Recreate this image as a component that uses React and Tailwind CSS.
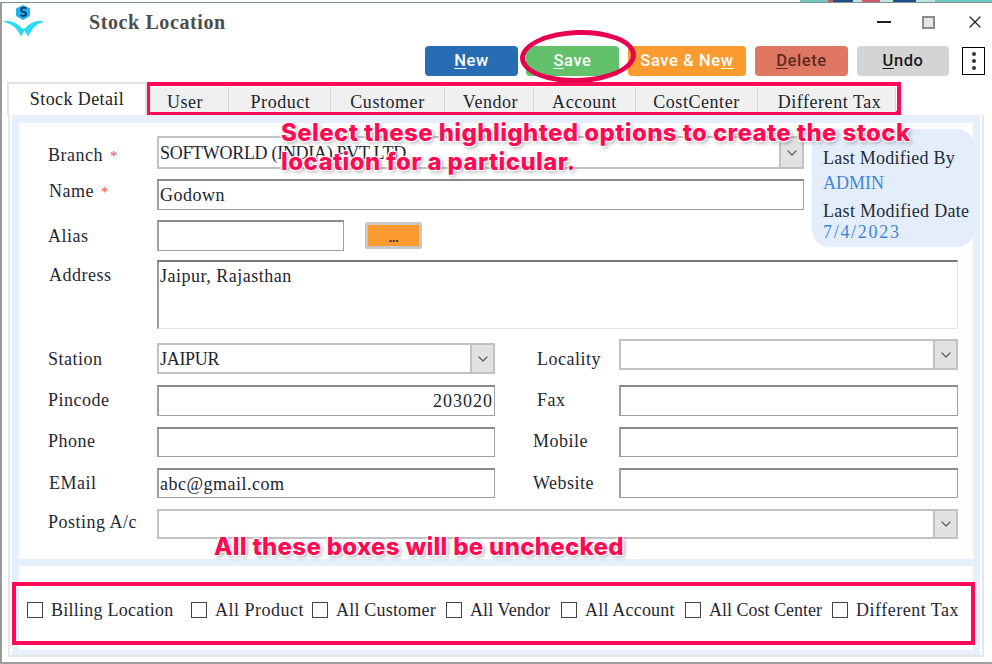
import React from "react";
import { X, ChevronDown } from "lucide-react";

const serif = "font-['Liberation_Serif',serif]";

function Logo() {
  return (
    <svg width="44" height="33" viewBox="0 0 44 33" fill="none">
      <path d="M20 1l7 3.500v7.500L20 16l-7-4V4.500z" fill="#1fb4ea" />
      <path d="M23.500 4.500c-2-1.500-5.500-1-5.500 1.200 0 2.800 5 1.500 5 4.300 0 2.200-3.500 2.500-5.500 1" stroke="#17306f" strokeWidth="1.900" />
      <path d="M0 17.500c7-1.500 13.500 1.500 18 6l2 1.500 3-1.500c4.500-4.500 10-7.500 18-6-6 2-10 5-12.500 9l-3.500 6-3.500-6-3.500 6-3.500-6C12 22.500 7 19.500 0 17.500z" fill="#26dcee" />
    </svg>
  );
}

function Field({ className, children }) {
  return (
    <div className={`h-[31px] border border-[#a0a0a0] border-t-2 border-l-2 border-t-[#8a8a8a] bg-white flex items-center px-[1px] text-[#1c2530] text-[18px] leading-none tracking-[0.5px] ${className}`}>
      {children}
    </div>
  );
}

function Select({ className, value }) {
  return (
    <div className={`h-[31px] border-2 border-[#c2c2c2] bg-white flex items-stretch text-[#1c2530] text-[18px] leading-none tracking-[-0.3px] ${className}`}>
      <span className="flex-1 flex items-center pl-[1px] overflow-hidden whitespace-nowrap">{value}</span>
      <span className="w-[23px] bg-[#e2e2e2] border-l-2 border-[#c2c2c2] flex items-center justify-center">
        <ChevronDown size={16} strokeWidth={1.800} className="text-[#5b5b5b]" />
      </span>
    </div>
  );
}

function Label({ className, children, star }) {
  return (
    <div className={`text-[18px] leading-none tracking-[0.5px] text-[#1f2833] ${className}`}>
      {children}
      {star && <span className="text-[#ea4b4b] ml-[7px] text-[15px]">*</span>}
    </div>
  );
}

function Btn({ className, k, rest, pre = "" }) {
  return (
    <button className={`h-[30px] rounded-[4px] font-['Roboto',sans-serif] font-medium text-[16.500px] tracking-[0.6px] flex items-center justify-center ${className}`}>
      {pre}<span className="underline underline-offset-2">{k}</span>{rest}
    </button>
  );
}

const tabs = [
  ["User", "w-[79px] pr-[8px]"],
  ["Product", "w-[102px] pl-[2px]"],
  ["Customer", "w-[114px]"],
  ["Vendor", "w-[89px] pl-[3px]"],
  ["Account", "w-[102px]"],
  ["CostCenter", "w-[122px]"],
  ["Different Tax", "w-[137px] pl-[6px]"],
];

const checks = [
  ["Billing Location", "w-[164px] tracking-[0.25px]"],
  ["All Product", "w-[122px] tracking-[0.5px] -ml-[1px] pl-[1px]"],
  ["All Customer", "w-[134px] tracking-[0.2px]"],
  ["All Vendor", "w-[115px] tracking-[0.1px]"],
  ["All Account", "w-[124px] tracking-[0.2px]"],
  ["All Cost Center", "w-[147px] tracking-[0px]"],
  ["Different Tax", "w-[134px] tracking-[0.5px]"],
];

const note = "font-['Inter',sans-serif] font-extrabold text-[#ff0a54] [text-shadow:0_0_2px_#fff,1px_1px_1px_#fff,-1px_-1px_1px_#fff,1px_-1px_1px_#fff,-1px_1px_1px_#fff,2px_2px_4px_#0006] whitespace-nowrap";

export default function App() {
  return (
    <div className={`relative w-[992px] h-[664px] overflow-hidden bg-white ${serif}`}>
      <div className="h-[2px] flex pl-[800px]">
        <span className="w-[28px] bg-[#6fc7c0]" />
        <span className="w-[5px] bg-[#c65b5b]" />
        <span className="w-[20px] bg-[#1f4f88]" />
        <span className="w-[9px] bg-[#bfe5e0]" />
        <span className="w-[18px] bg-[#d0586a]" />
        <span className="w-[13px] bg-[#bfe5e0]" />
        <span className="w-[23px] bg-[#1f4f88]" />
        <span className="w-[19px] bg-[#bfe5e0]" />
        <span className="w-[57px] bg-[#6fc7c0]" />
      </div>
      <div className="h-[662px] border-t border-t-[#7f9490] border-l-2 border-l-[#9a9a9a] border-b-2 border-b-[#a0a0a0] flex flex-col">
        {/* title bar */}
        <div className="h-[35px] flex items-center shrink-0">
          <div className="w-[46px] flex justify-center -mt-[1px]"><Logo /></div>
          <div className="ml-[41px] pt-[2px] text-[20px] font-bold text-[#4d4d4d] tracking-[0.6px]">Stock Location</div>
          <div className="ml-auto flex items-center pt-[3px]">
            <span className="w-[14px] h-[2px] bg-[#222]" />
            <span className="w-[13px] h-[13px] ml-[31px] border-2 border-[#8c8c8c] bg-[#e6e6e6]" />
            <X size={20} strokeWidth={1.500} className="ml-[30px] mr-[7px] text-[#222]" />
          </div>
        </div>
        {/* toolbar */}
        <div className="h-[30px] mt-[8px] flex items-center shrink-0 pl-[423px]">
          <Btn className="w-[93px] bg-[#266db3] text-white" k="N" rest="ew" />
          <Btn className="w-[93px] ml-[8px] bg-[#63c16b] text-white" k="S" rest="ave" />
          <Btn className="w-[118px] ml-[9px] bg-[#fb9a2f] text-white" pre="Save & Ne" k="w" rest="" />
          <Btn className="w-[93px] ml-[9px] bg-[#e07763] text-[#5b2a20]" k="D" rest="elete" />
          <Btn className="w-[92px] ml-[9px] bg-[#d4d4d4] text-[#1b1b1b]" k="U" rest="ndo" />
          <div className="w-[23px] h-[28px] ml-[13px] border border-black flex flex-col items-center justify-center gap-[3px]">
            <span className="w-[4px] h-[4px] rounded-full bg-[#333]" />
            <span className="w-[4px] h-[4px] rounded-full bg-[#333]" />
            <span className="w-[4px] h-[4px] rounded-full bg-[#333]" />
          </div>
        </div>
        {/* tabs */}
        <div className="h-[34px] mt-[5px] pl-[5px] flex items-end shrink-0 relative z-10">
          <div className="w-[140px] h-[33px] bg-white border-t-2 border-x-2 border-[#e2e2e2] flex items-center justify-center text-[18px] tracking-[0.4px] text-[#222]">Stock Detail</div>
          <div className="flex h-[25px] ml-[3px] mb-[3px] bg-[#f0f0f0] border-r border-[#d6d6d6]">
            {tabs.map(([t, w]) => (
              <div key={t} className={`${w} border-r border-[#d6d6d6] last:border-r-0 flex items-center justify-center text-[18px] leading-none tracking-[0.55px] text-[#1c2530] pt-[4px]`}>{t}</div>
            ))}
          </div>
        </div>
        {/* outer panel */}
        <div className="ml-[6px] mr-[8px] mb-[5px] flex-1 border-2 border-[#e6e6e6] border-t-0 min-h-0">
          <div className="h-full mx-[2px] bg-[#e6f0fc] px-[7px] pt-[8px] pb-[5px] flex flex-col">
            <div className="h-[436px] bg-white pl-[29px] pr-[15px] pt-[13px] shrink-0">
              {/* top */}
              <div className="flex items-start">
                <div className="w-[756px]">
                  <div className="flex items-center h-[33px]">
                    <Label className="w-[109px] pt-[5px]" star>Branch</Label>
                    <Select className="flex-1 !h-[33px]" value="SOFTWORLD (INDIA) PVT LTD" />
                  </div>
                  <div className="flex items-center mt-[10px]">
                    <Label className="w-[109px] pl-[1px] -mt-[8px]" star>Name</Label>
                    <Field className="flex-1">Godown</Field>
                  </div>
                  <div className="flex items-center mt-[10px]">
                    <Label className="w-[109px]">Alias</Label>
                    <Field className="w-[187px]" />
                    <div className="ml-[21px] w-[57px] h-[27px] border-[3px] border-[#c8c8c8] rounded-[2px] bg-[#fb9a2f] flex items-center justify-center text-[13px] text-[#222] font-bold leading-none pt-[4px]">...</div>
                  </div>
                </div>
                <div className="w-[163px] h-[118px] -mt-[7px] ml-[8px] -mr-[17px] rounded-[18px] bg-[#e4eefb] pl-[11px] pt-[20px] text-[18px] leading-none shrink-0">
                  <div className="text-[#222b36] whitespace-nowrap tracking-[0.25px]">Last Modified By</div>
                  <div className="text-[#3f86d6] mt-[7px]">ADMIN</div>
                  <div className="text-[#222b36] mt-[10px] whitespace-nowrap tracking-[0.3px]">Last Modified Date</div>
                  <div className="text-[#3f86d6] mt-[3px] tracking-[1.700px]">7/4/2023</div>
                </div>
              </div>
              {/* address */}
              <div className="flex items-start mt-[9px]">
                <Label className="w-[109px] pl-[1px] pt-[6px]">Address</Label>
                <div className="flex-1 h-[69px] border border-[#e4e4e4] border-t-2 border-t-[#777] border-l-2 border-l-[#999] px-[1px] pt-[4px] text-[18px] leading-[20px] tracking-[0.5px] text-[#1c2530]">Jaipur, Rajasthan</div>
              </div>
              {/* station */}
              <div className="flex items-start mt-[10px] h-[35px]">
                <Label className="w-[109px] pt-[11px]">Station</Label>
                <Select className="w-[338px] mt-[4px]" value="JAIPUR" />
                <Label className="w-[86px] ml-[38px] pl-[4px] pt-[11px]">Locality</Label>
                <Select className="flex-1" value="" />
              </div>
              <div className="flex items-center mt-[11px]">
                <Label className="w-[109px] -mt-[1px]">Pincode</Label>
                <Field className="w-[338px] justify-end !tracking-[1px]">203020</Field>
                <Label className="w-[86px] ml-[38px] pl-[4px] -mt-[1px]">Fax</Label>
                <Field className="flex-1" />
              </div>
              <div className="flex items-center mt-[11px]">
                <Label className="w-[109px] -mt-[2px]">Phone</Label>
                <Field className="w-[338px] !h-[30px]" />
                <Label className="w-[86px] ml-[38px] -mt-[2px]">Mobile</Label>
                <Field className="flex-1 !h-[30px]" />
              </div>
              <div className="flex items-center mt-[11px]">
                <Label className="w-[109px] pl-[1px] -mt-[1px]">EMail</Label>
                <Field className="w-[338px] !h-[30px]">abc@gmail.com</Field>
                <Label className="w-[86px] ml-[38px] -mt-[1px]">Website</Label>
                <Field className="flex-1 !h-[30px]" />
              </div>
              <div className="flex items-center mt-[11px]">
                <Label className="w-[109px] -mt-[5px]">Posting A/c</Label>
                <Select className="flex-1 !h-[30px]" value="" />
              </div>
            </div>
            {/* checks */}
            <div className="flex-1 mt-[7px] bg-white pl-[8px] flex items-center pt-[3px]">
              {checks.map(([t, w]) => (
                <div key={t} className={`${w} flex items-center gap-[8px] shrink-0 whitespace-nowrap text-[18px] leading-none text-[#1f2833]`}>
                  <span className="w-[16px] h-[16px] border border-[#444] shrink-0" />
                  {t}
                </div>
              ))}
            </div>
          </div>
        </div>
      </div>

      {/* annotations */}
      <div className="absolute left-[146px] top-[82px] w-[755px] h-[33px] border-[4px] border-[#ff0a54]" />
      <div className="absolute left-[12px] top-[582px] w-[963px] h-[63px] border-[4px] border-[#ff0a54]" />
      <div className="absolute left-[520px] top-[30px] w-[116px] h-[53px] rounded-[50%] border-[5px] border-[#e6004f] -rotate-[2deg]" />
      <div className={`absolute left-[281px] top-[118px] text-[24px] leading-[29px] tracking-[0.4px] ${note}`}>
        Select these highlighted options to create the stock<br />location for a particular.
      </div>
      <div className={`absolute left-[214px] top-[532px] text-[24px] leading-[29px] tracking-[0.3px] ${note}`}>All these boxes will be unchecked</div>
    </div>
  );
}
